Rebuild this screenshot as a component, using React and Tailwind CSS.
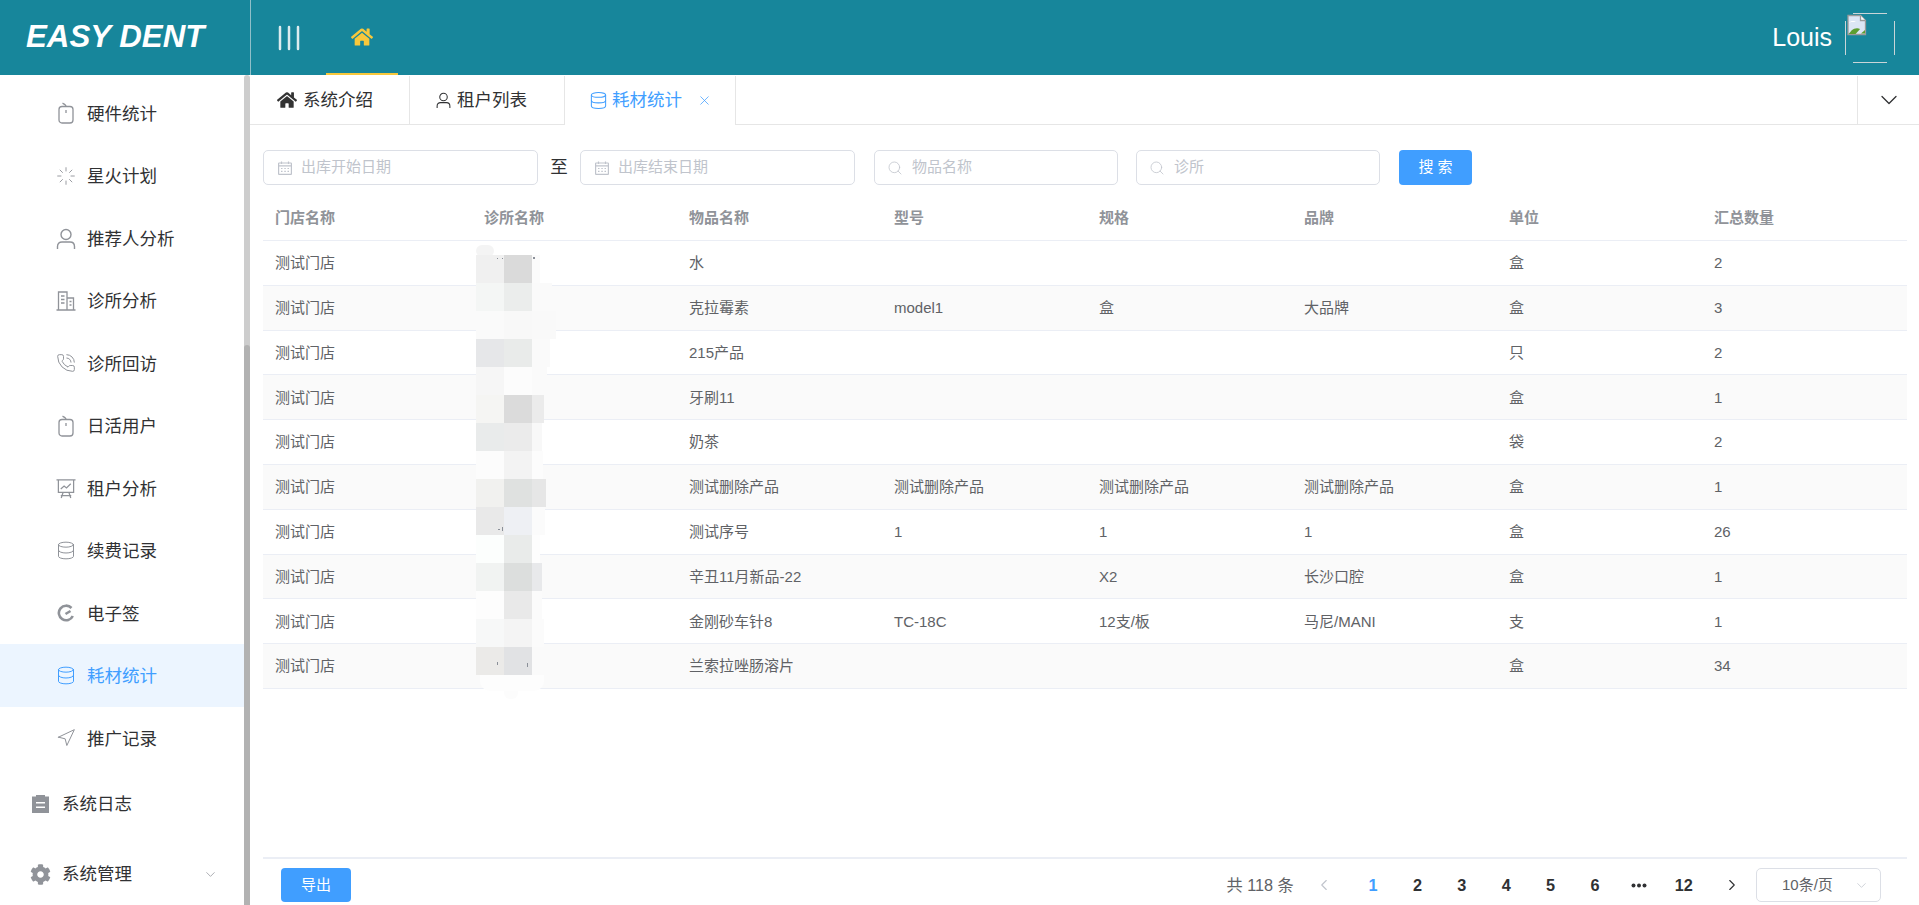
import React from 'react';
import { FaHome, FaCog } from 'react-icons/fa';
import { ChevronDown, ChevronLeft, ChevronRight, Database, Loader, Navigation, PhoneCall, Search, X } from 'lucide-react';

const MouseIcon = () => (
    <svg width="16" height="22" viewBox="0 0 16 22" fill="none" stroke="currentColor" strokeWidth="1.3">
        <rect x="1" y="4.5" width="14" height="16.5" rx="3" />
        <path d="M8 8v3M8 4.5C8 2.5 6.500 2 4.500 1.200" />
    </svg>
);

const UserIcon = ({ size = 20 }) => (
    <svg width={size} height={size + 1} viewBox="0 0 20 21" fill="none" stroke="currentColor" strokeWidth="1.4">
        <circle cx="10" cy="6.5" r="5" />
        <path d="M1.5 21v-2.5c0-3 2-4.500 4.500-4.500h8c2.500 0 4.500 1.500 4.500 4.500V21" />
    </svg>
);

const BuildingIcon = () => (
    <svg width="20" height="20" viewBox="0 0 20 20" fill="none" stroke="currentColor" strokeWidth="1.3">
        <path d="M2.500 19V1h8.500v18M11 7h6.500v12M0.500 19h19M5 5h3.500M5 8.500h3.500M5 12h3.500M13.500 10.500h2M13.500 14h2" />
    </svg>
);

const ChartBoardIcon = () => (
    <svg width="21" height="21" viewBox="0 0 21 21" fill="none" stroke="currentColor" strokeWidth="1.300">
        <path d="M0.500 1.500h20M2.500 1.500v13h16v-13M7.500 14.500l-2 6M13.500 14.500l2 6M5 18h11" />
        <path d="M5 11l3.500-3 2.500 2 4.500-4.500" />
    </svg>
);

const PieIcon = () => (
    <svg width="18" height="18" viewBox="0 0 18 18" fill="none" stroke="currentColor" strokeWidth="2.600">
        <path d="M14.500 4A7.300 7.300 0 1 0 15.800 12" />
        <path d="M8.500 10l5-3" />
    </svg>
);

const ClipboardIcon = () => (
    <svg width="17" height="19" viewBox="0 0 17 19" fill="#909399">
        <path d="M0 2.500h4V1h9v1.500h4V19H0z" />
        <path d="M4 8h9v1.500H4zM4 12.500h9V14H4z" fill="#fff" />
    </svg>
);

const CalendarIcon = () => (
    <svg className="shrink-0" width="14" height="14" viewBox="0 0 14 14" fill="none" stroke="#c0c4cc" strokeWidth="1.200">
        <rect x="0.600" y="2" width="12.800" height="11.400" rx="0.500" />
        <path d="M0.600 4.800h12.800M3.500 0.500v2.500M10.500 0.500v2.500" />
        <path d="M3 7.500h1.500M6.300 7.500h1.500M9.500 7.500h1.500M3 10.300h1.500M6.300 10.300h1.500M9.500 10.300h1.500" />
    </svg>
);

const Avatar = () => (
    <svg width="50" height="50" viewBox="0 0 50 50" fill="none">
        <path d="M8 0.500h34M49.500 8v34M8 49.500h34M0.500 8v34" stroke="#c9d5d8" />
        <path d="M3 2.500h12.500l5 5v14H3z" fill="#dce6f5" stroke="#9a9a9a" strokeWidth="1.300" />
        <path d="M15.500 2.500v5h5" fill="#fff" stroke="#9a9a9a" strokeWidth="1.300" />
        <path d="M4 10c2-3 6-2 7-1H6z" fill="#fff" />
        <path d="M3.600 21l3-3.500c2.500-2.500 6-3 8.500-1.500l-4.500 5z" fill="#5c9e31" />
        <path d="M16 20.500l4-3.500v3.500z" fill="#5c9e31" />
    </svg>
);

const subMenu = [
    { label: '硬件统计', icon: <MouseIcon /> },
    { label: '星火计划', icon: <Loader size={24} strokeWidth={1.1} /> },
    { label: '推荐人分析', icon: <UserIcon /> },
    { label: '诊所分析', icon: <BuildingIcon /> },
    { label: '诊所回访', icon: <PhoneCall size={22} strokeWidth={1.2} /> },
    { label: '日活用户', icon: <MouseIcon /> },
    { label: '租户分析', icon: <ChartBoardIcon /> },
    { label: '续费记录', icon: <Database size={23} strokeWidth={1.2} /> },
    { label: '电子签', icon: <PieIcon /> },
    { label: '耗材统计', icon: <Database size={23} strokeWidth={1.2} />, active: true },
    { label: '推广记录', icon: <Navigation size={22} strokeWidth={1.2} /> },
];

const columns = ['门店名称', '诊所名称', '物品名称', '型号', '规格', '品牌', '单位', '汇总数量'];

const rows = [
    ['水', '', '', '', '盒', '2'],
    ['克拉霉素', 'model1', '盒', '大品牌', '盒', '3'],
    ['215产品', '', '', '', '只', '2'],
    ['牙刷11', '', '', '', '盒', '1'],
    ['奶茶', '', '', '', '袋', '2'],
    ['测试删除产品', '测试删除产品', '测试删除产品', '测试删除产品', '盒', '1'],
    ['测试序号', '1', '1', '1', '盒', '26'],
    ['辛丑11月新品-22', '', 'X2', '长沙口腔', '盒', '1'],
    ['金刚砂车针8', 'TC-18C', '12支/板', '马尼/MANI', '支', '1'],
    ['兰索拉唑肠溶片', '', '', '', '盒', '34'],
];

// mosaic over the clinic column: [y, colA, colB, colC, colC right edge]
const mosaic = [
    [255, '#f0f0f0', '#dadada', '#fbfbfb', 540],
    [283, '#f4f6f5', '#ebedec', '#fafafa', 552],
    [311, '#fafafa', '#f8f8f8', '#f9f9f9', 556],
    [339, '#e6e7e9', '#e9ebea', '#fafafa', 550],
    [367, '#f6f6f6', '#fcfcfc', '#fafafa', 547],
    [395, '#f5f5f3', '#dbdbdb', '#ebebeb', 544],
    [423, '#e9ebeb', '#ebebeb', '#f8f8f8', 542],
    [451, '#fcfcfc', '#f3f3f3', '#fcfcfc', 543],
    [479, '#f1f1ef', '#dfe1e0', '#e6e6e6', 546],
    [507, '#e9e9e9', '#eef0f4', '#fbfbfb', 545],
    [535, '#fcfefd', '#e9ebea', '#fdfdfd', 540],
    [563, '#f1f3f2', '#dcdedd', '#e8e9eb', 542],
    [591, '#fdfdfd', '#e9e9e9', '#fbfbfb', 542],
    [619, '#f7f8f8', '#f4f4f4', '#fbfbfb', 544],
    [647, '#ebeae8', '#e1e2e4', '#fafafa', 544],
];

const Mosaic = () => (
    <svg className="absolute left-[470px] top-[240px]" width="100" height="470" viewBox="470 240 100 470">
        <rect x="476" y="245" width="18" height="12" rx="6" fill="#f4f4f4" />
        <rect x="504" y="675" width="14" height="24" rx="6" fill="#fcfcfc" />
        <rect x="480" y="660" width="64" height="31" rx="10" fill="#fdfdfd" />
        {mosaic.map(([y, a, b, c, right]) => (
            <g key={y}>
                <rect x="476" y={y} width="28" height="28" fill={a} />
                <rect x="504" y={y} width="28" height="28" fill={b} />
                <rect x="532" y={y} width={right - 532} height="28" fill={c} />
            </g>
        ))}
        <path d="M497 258h1v1h-1zM502 258h1v1h-1zM533 257h2v2h-2zM498 529h2v1h-2zM502 527h1v4h-1zM497 662h1v3h-1zM527 663h1v4h-1z" fill="#8a8f98" />
    </svg>
);

const FilterInput = ({ icon, text, className }) => (
    <div className={`flex h-[35px] items-center gap-[9px] rounded-[5px] border border-[#dcdfe6] text-[15px] text-[#c0c4cc] ${className}`}>
        {icon}
        <span>{text}</span>
    </div>
);

const App = () => (
    <div className="relative flex h-[905px] flex-col overflow-hidden bg-white font-['Liberation_Sans','Noto_Sans_CJK_SC',sans-serif]">
        <header className="flex h-[75px] shrink-0 items-center bg-[#17869b] text-white">
            <div className="flex h-full w-[251px] items-center border-r border-[#8fbfc9] pl-[26px] text-[31.25px] font-bold italic">EASY DENT</div>
            <svg className="ml-[27px]" width="22" height="26" viewBox="0 0 22 26" fill="none" stroke="#dcecef" strokeWidth="2.500" strokeLinecap="round">
                <path d="M2 2v22M11 2v22M20 2v22" />
            </svg>
            <div className="ml-[26px] flex h-full w-[72px] items-center justify-center border-b-[2.500px] border-[#f8c83c] pt-[1px] text-[#f8c83c]">
                <FaHome size={22} />
            </div>
            <span className="ml-auto text-[25px]">Louis</span>
            <div className="ml-[13px] mr-[24px]"><Avatar /></div>
        </header>

        <div className="flex min-h-0 flex-1">
            <aside className="relative w-[250px] shrink-0 overflow-hidden pt-[6.750px] text-[17.500px] text-[#303133]">
                {subMenu.map((item) => (
                    <div key={item.label} className={`mr-[6px] flex h-[62.500px] items-center pl-[56px] ${item.active ? 'bg-[#ecf5ff] text-[#409eff]' : ''}`}>
                        <span className={`mr-[11px] flex w-[20px] justify-center ${item.active ? 'text-[#409eff]' : 'text-[#909399]'}`}>{item.icon}</span>
                        <span className="pt-[2px]">{item.label}</span>
                    </div>
                ))}
                <div className="flex h-[68.750px] items-center pl-[32px]">
                    <span className="mr-[13px] flex w-[17px]"><ClipboardIcon /></span>
                    系统日志
                </div>
                <div className="mt-[2px] flex h-[68.750px] items-center pl-[30px]">
                    <span className="mr-[11px] flex w-[21px] text-[#909399]"><FaCog size={21} /></span>
                    系统管理
                    <ChevronDown className="ml-[71px] text-[#909399]" size={15} strokeWidth={1.200} />
                </div>
                <div className="absolute right-0 top-0 h-full w-[6px] rounded-t-[3px] bg-[#cdcdcd]">
                    <div className="mt-[270px] h-[560px] rounded-t-[3px] bg-[#b2b2b2]" />
                </div>
            </aside>

            <main className="flex min-w-0 flex-1 flex-col">
                <nav className="flex h-[50px] shrink-0 border-b border-[#e6e6e6] pt-[1px] text-[17.500px] text-[#303133]">
                    <div className="flex w-[160px] items-center border-r border-[#e6e6e6] pl-[27px]">
                        <FaHome className="mr-[6px] text-[#333]" size={20} />
                        系统介绍
                    </div>
                    <div className="flex w-[155px] items-center border-r border-[#e6e6e6] pl-[26px]">
                        <UserIcon size={15} />
                        <span className="ml-[6px]">租户列表</span>
                    </div>
                    <div className="flex h-[49px] w-[171px] items-center border-r border-[#e6e6e6] bg-white pl-[24px] text-[#409eff]">
                        <Database size={19} strokeWidth={1.300} />
                        <span className="ml-[4px]">耗材统计</span>
                        <X className="ml-[15px]" size={15} strokeWidth={1.200} />
                    </div>
                    <div className="ml-auto flex w-[62px] items-center justify-center border-l border-[#e6e6e6]">
                        <ChevronDown size={28} strokeWidth={1.100} />
                    </div>
                </nav>

                <section className="flex min-h-0 flex-1 flex-col pl-[13px] pr-[12px] pt-[25px]">
                    <div className="flex items-center">
                        <FilterInput className="w-[275px] pl-[14px]" icon={<CalendarIcon />} text="出库开始日期" />
                        <span className="w-[42px] text-center text-[17.500px] text-[#303133]">至</span>
                        <FilterInput className="w-[275px] pl-[14px]" icon={<CalendarIcon />} text="出库结束日期" />
                        <FilterInput className="ml-[19px] w-[244px] pl-[12px]" icon={<Search size={16} strokeWidth={1.200} />} text="物品名称" />
                        <FilterInput className="ml-[18px] w-[244px] pl-[12px]" icon={<Search size={16} strokeWidth={1.200} />} text="诊所" />
                        <button className="ml-[19px] h-[35px] w-[73px] rounded-[4px] bg-[#409eff] text-[15px] text-white">搜 索</button>
                    </div>

                    <div className="mt-[11px] min-h-0 flex-1 text-[15px] text-[#606266]">
                        <div className="grid h-[45px] grid-cols-[209px_repeat(7,205px)] items-center border-b border-[#ebeef5] pt-[1px] font-bold text-[#909399]">
                            {columns.map((col) => (
                                <div key={col} className="px-3">{col}</div>
                            ))}
                        </div>
                        {rows.map((row, i) => (
                            <div key={i} className={`grid h-[44.800px] grid-cols-[209px_repeat(7,205px)] items-center border-b border-[#ebeef5] pt-[1px] ${i % 2 ? 'bg-[#fafafa]' : ''}`}>
                                <div className="px-3">测试门店</div>
                                <div className="px-3" />
                                {row.map((cell, j) => (
                                    <div key={j} className="px-3">{cell}</div>
                                ))}
                            </div>
                        ))}
                    </div>

                    <footer className="flex h-[48px] shrink-0 items-center border-t-2 border-[#ebeef5] pl-[18px] pr-[26px] pt-[6px] text-[16.250px] text-[#606266]">
                        <button className="h-[34px] w-[70px] rounded-[4px] bg-[#409eff] text-[15px] text-white">导出</button>
                        <span className="ml-auto mr-[10px]">共 118 条</span>
                        <div className="flex w-[40px] justify-center text-[#c0c4cc]"><ChevronLeft size={18} strokeWidth={1.500} /></div>
                        <div className="ml-[7px] flex items-center font-bold text-[#303133]">
                            {['1', '2', '3', '4', '5', '6', 'more', '12'].map((page) => (
                                <span key={page} className={`flex w-[44.400px] justify-center ${page === '1' ? 'text-[#409eff]' : ''}`}>
                                    {page === 'more' ? (
                                        <svg width="16" height="5" viewBox="0 0 16 5" fill="#303133">
                                            <circle cx="2.500" cy="2.500" r="2" />
                                            <circle cx="8" cy="2.500" r="2" />
                                            <circle cx="13.500" cy="2.500" r="2" />
                                        </svg>
                                    ) : page}
                                </span>
                            ))}
                        </div>
                        <div className="ml-[6px] flex w-[40px] justify-center text-[#303133]"><ChevronRight size={18} strokeWidth={1.500} /></div>
                        <div className="ml-[4px] flex h-[34px] w-[125px] items-center rounded-[5px] border border-[#dcdfe6] pl-[25px] text-[15px]">
                            10条/页
                            <ChevronDown className="ml-[21px] text-[#c0c4cc]" size={15} strokeWidth={1.200} />
                        </div>
                    </footer>
                </section>
            </main>
        </div>
        <Mosaic />
    </div>
);

export default App;
